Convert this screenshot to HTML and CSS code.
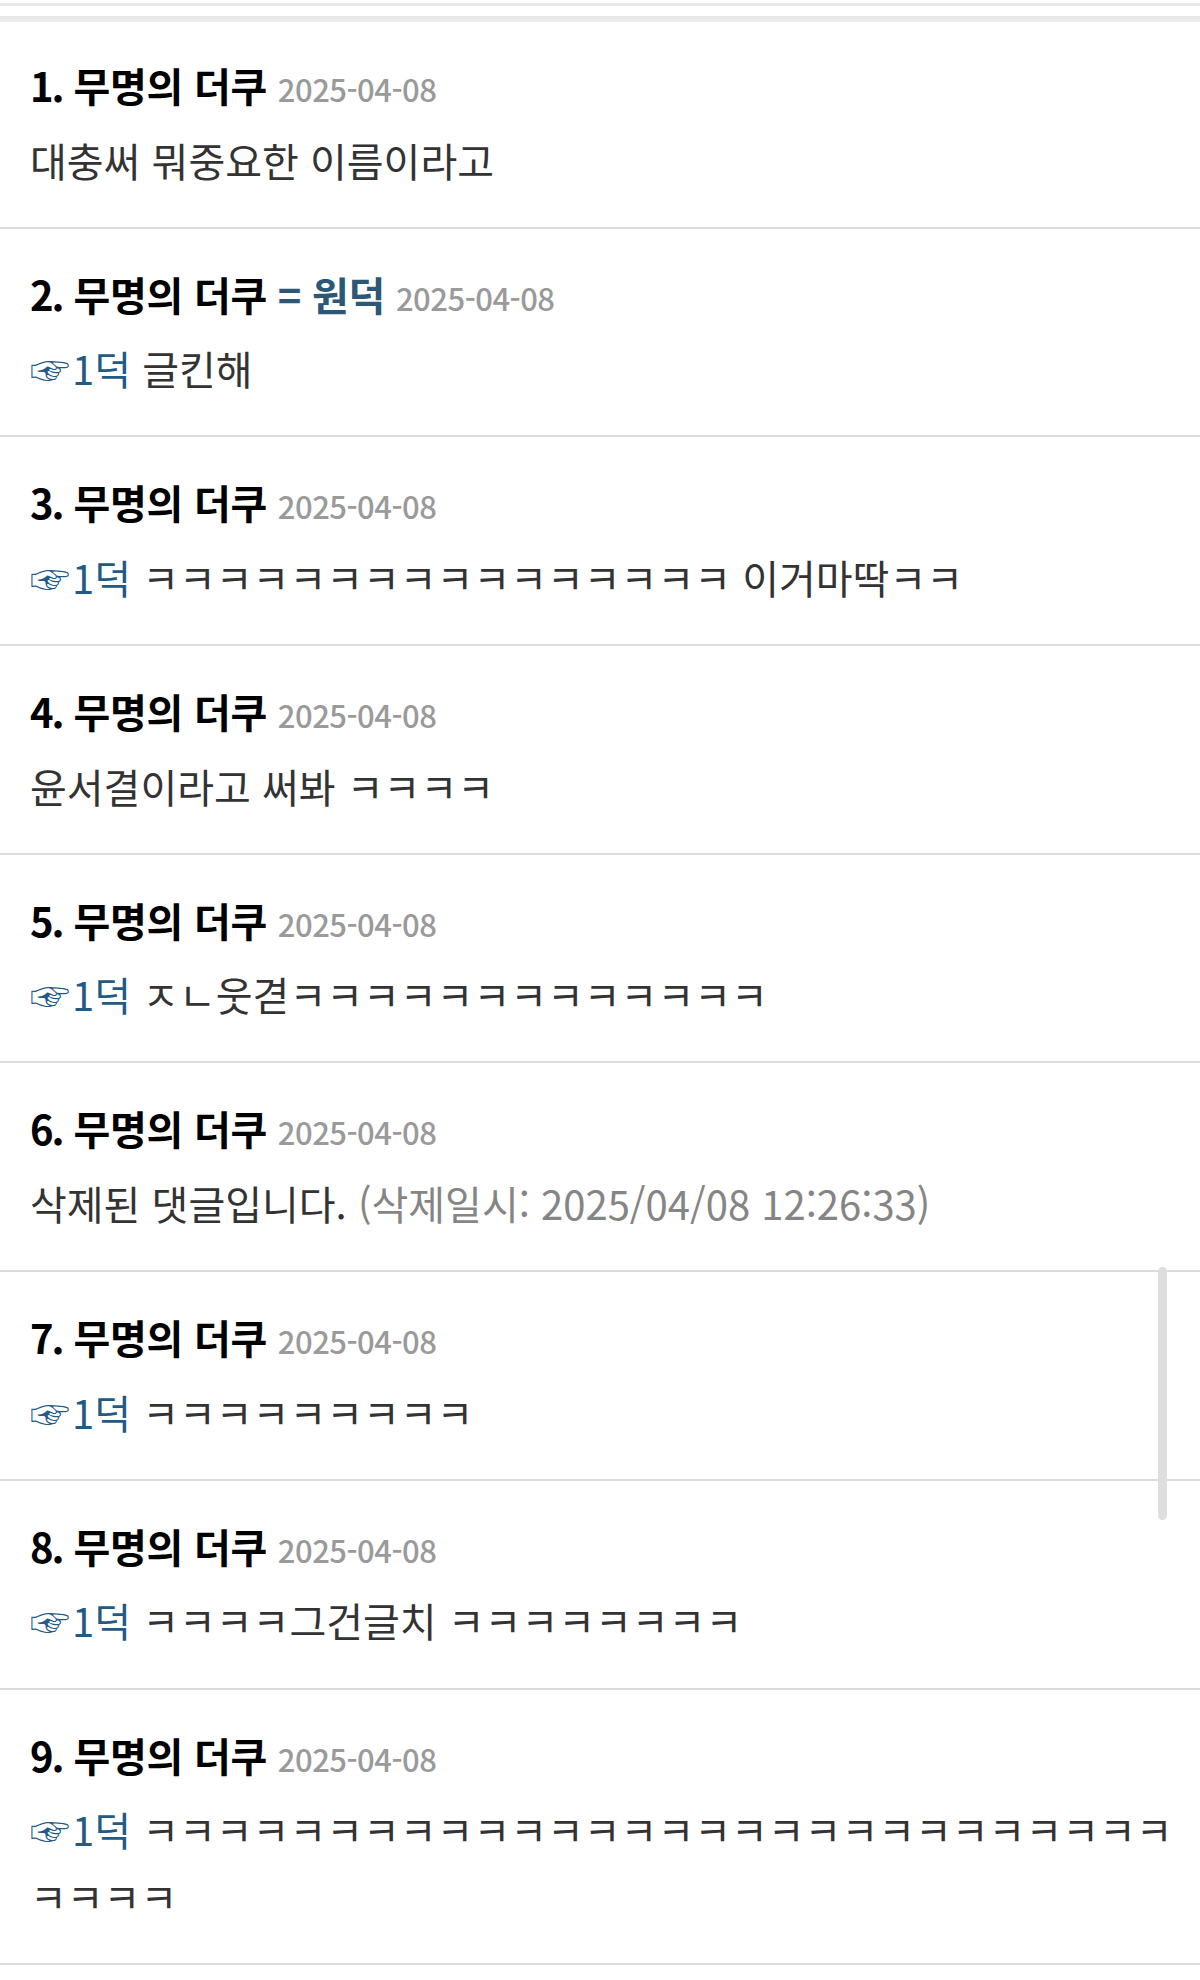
FILE: index.html
```html
<!DOCTYPE html>
<html lang="ko">
<head>
  <meta charset="UTF-8">
  <meta name="viewport" content="width=device-width, initial-scale=1.0">
  <title>댓글</title>
  <link rel="stylesheet" href="styles.css">
</head>
<body>

  <div class="comments">
    <div class="top-line"></div>
    <div class="top-bar"></div>

    <ul class="comment-list">
      <li class="comment">
        <div class="comment-head"><span class="num">1.</span> 무명의 더쿠 <span class="date">2025-04-08</span></div>
        <div class="comment-body">대충써 뭐중요한 이름이라고</div>
      </li>
      <li class="comment">
        <div class="comment-head"><span class="num">2.</span> 무명의 더쿠 <span class="op">= 원덕</span> <span class="date">2025-04-08</span></div>
        <div class="comment-body"><span class="reply"><span class="hand">☞</span>1덕</span> 글킨해</div>
      </li>
      <li class="comment">
        <div class="comment-head"><span class="num">3.</span> 무명의 더쿠 <span class="date">2025-04-08</span></div>
        <div class="comment-body"><span class="reply"><span class="hand">☞</span>1덕</span> ㅋㅋㅋㅋㅋㅋㅋㅋㅋㅋㅋㅋㅋㅋㅋㅋ 이거마딱ㅋㅋ</div>
      </li>
      <li class="comment">
        <div class="comment-head"><span class="num">4.</span> 무명의 더쿠 <span class="date">2025-04-08</span></div>
        <div class="comment-body">윤서결이라고 써봐 ㅋㅋㅋㅋ</div>
      </li>
      <li class="comment">
        <div class="comment-head"><span class="num">5.</span> 무명의 더쿠 <span class="date">2025-04-08</span></div>
        <div class="comment-body"><span class="reply"><span class="hand">☞</span>1덕</span> ㅈㄴ웃겯ㅋㅋㅋㅋㅋㅋㅋㅋㅋㅋㅋㅋㅋ</div>
      </li>
      <li class="comment">
        <div class="comment-head"><span class="num">6.</span> 무명의 더쿠 <span class="date">2025-04-08</span></div>
        <div class="comment-body">삭제된 댓글입니다. <span class="deleted-at">(삭제일시: 2025/04/08 12:26:33)</span></div>
      </li>
      <li class="comment">
        <div class="comment-head"><span class="num">7.</span> 무명의 더쿠 <span class="date">2025-04-08</span></div>
        <div class="comment-body"><span class="reply"><span class="hand">☞</span>1덕</span> ㅋㅋㅋㅋㅋㅋㅋㅋㅋ</div>
      </li>
      <li class="comment">
        <div class="comment-head"><span class="num">8.</span> 무명의 더쿠 <span class="date">2025-04-08</span></div>
        <div class="comment-body"><span class="reply"><span class="hand">☞</span>1덕</span> ㅋㅋㅋㅋ그건글치 ㅋㅋㅋㅋㅋㅋㅋㅋ</div>
      </li>
      <li class="comment">
        <div class="comment-head"><span class="num">9.</span> 무명의 더쿠 <span class="date">2025-04-08</span></div>
        <div class="comment-body"><span class="reply"><span class="hand">☞</span>1덕</span> ㅋㅋㅋㅋㅋㅋㅋㅋㅋㅋㅋㅋㅋㅋㅋㅋㅋㅋㅋㅋㅋㅋㅋㅋㅋㅋㅋㅋㅋㅋㅋㅋ</div>
      </li>
    </ul>

    <div class="scroll-thumb"></div>
  </div>

</body>
</html>
```

FILE: styles.css
```css
* {
  margin: 0;
  padding: 0;
  box-sizing: border-box;
}

body {
  font-family: 'Noto Sans CJK KR', 'Noto Sans', sans-serif;
  background: #fff;
  color: #333;
  width: 1200px;
  height: 1980px;
  overflow: hidden;
}

.comments {
  position: relative;
  padding-top: 3px;
}

.top-line {
  height: 3px;
  background: #e9e9e9;
}

.top-bar {
  height: 6px;
  margin-top: 10px;
  background: linear-gradient(#e4e4e4, #eeeeee);
}

.comment-list {
  list-style: none;
}

.comment {
  padding: 40px 16px 33.2px 30px;
  border-bottom: 2px solid #dcdcdc;
}

.comment:first-child {
  padding-top: 38px;
}

.comment-head {
  height: 50px;
  font-size: 40px;
  font-weight: bold;
  color: #000;
  line-height: 50px;
  letter-spacing: -0.3px;
  white-space: nowrap;
}

.comment-head .num {
  letter-spacing: -2px;
}

.comment-head .op {
  color: #2c5777;
}

.comment-head .date {
  font-size: 31px;
  font-weight: 500;
  color: #9a9a9a;
  letter-spacing: -0.5px;
}

.comment-body {
  margin-top: 16.5px;
  font-size: 40px;
  line-height: 67px;
  color: #333;
  word-break: break-all;
}

.reply {
  color: #1f5b87;
  line-height: 1;
}

.hand {
  margin-right: 2px;
}

.deleted-at {
  color: #858585;
}

.scroll-thumb {
  position: absolute;
  top: 1267px;
  left: 1158px;
  width: 9px;
  height: 253px;
  border-radius: 5px;
  background: #dedede;
}
```
